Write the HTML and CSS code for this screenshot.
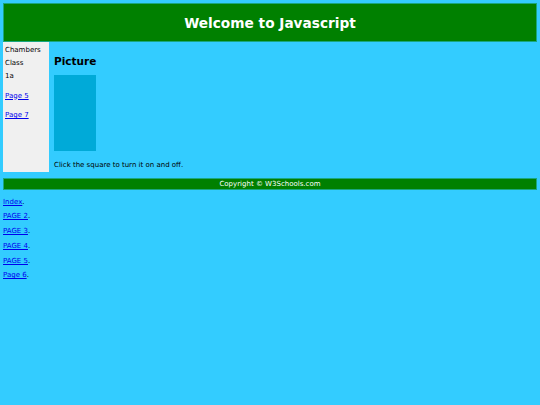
FILE: index.html
```html
<!DOCTYPE html>
<html lang="en">
<head>
    <meta charset="UTF-8">
    <title>Welcome to Javascript</title>
    <link rel="stylesheet" href="styles.css">
</head>
<body>

<div class="header">
    <h1>Welcome to Javascript</h1>
</div>

<div class="main">

    <div class="side">
        <div class="lines">
            Chambers<br>
            Class<br>
            1a
        </div>
        <p><a href="#">Page 5</a></p>
        <p><a href="#">Page 7</a></p>
    </div>

    <div class="article">
        <h3>Picture</h3>
        <div class="square"></div>
        <p>Click the square to turn it on and off.</p>
    </div>

</div>

<div class="footer">Copyright &copy; W3Schools.com</div>

<p class="link"><a href="#">Index</a>.</p>
<p class="link"><a href="#">PAGE 2</a>.</p>
<p class="link"><a href="#">PAGE 3</a>.</p>
<p class="link"><a href="#">PAGE 4</a>.</p>
<p class="link"><a href="#">PAGE 5</a>.</p>
<p class="link"><a href="#">Page 6</a>.</p>

</body>
</html>
```

FILE: styles.css
```css
*{
    margin:0;
    padding:0;
}

body{
    margin: 3px;
    background-color: #33ccff;
    font-family: "DejaVu Sans", Verdana, sans-serif;
    font-size: 7px;
    color: #000;
}

a{
    color: #0000ee;
}

.header,.footer{
    background-color: #008000;
    border: 1px solid #1aa67f;
    color: #fff;
    text-align: center;
}

.header{
    height: 37px;
    line-height: 39px;
}

.header h1{
    font-size: 13.7px;
    font-weight: bold;
}

.main{
    display: flex;
}

.side{
    width: 44px;
    padding: 0 0 0 2px;
    height: 130px;
    background-color: #f0f0f0;
}

.side .lines{
    line-height: 13px;
    padding-top: 2px;
}

.side p{
    margin-top: 6.5px;
    line-height: 13px;
}

.article{
    padding-left: 5px;
}

.article h3{
    font-size: 10.5px;
    line-height: 12px;
    margin-top: 13px;
}

.square{
    width: 42px;
    height: 76px;
    margin-top: 8px;
    background-color: #00aad8;
}

.article p{
    margin-top: 9.5px;
    line-height: 9px;
}

.footer{
    margin-top: 6px;
    height: 10px;
    line-height: 11px;
}

.link{
    margin-top: 7.5px;
    line-height: 7.3px;
}

.link:first-of-type{
    margin-top: 8.5px;
}
```
